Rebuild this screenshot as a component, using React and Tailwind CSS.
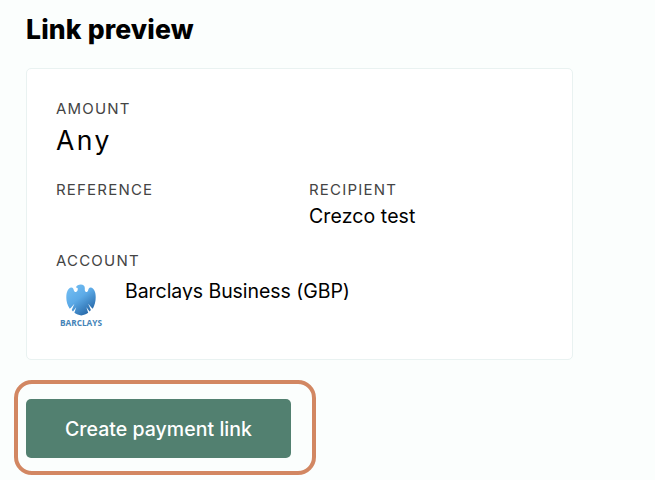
import React from 'react';

const Label = ({ children }) => (
  <p className="h-5 text-[15px] leading-5 tracking-[1.2px] text-[#444]">{children}</p>
);

const BarclaysLogo = () => (
  <svg width="50" height="50" viewBox="0 0 50 50" className="shrink-0 overflow-visible">
    <defs>
      <linearGradient id="eagle" x1="0" y1="0" x2="0.7" y2="1">
        <stop offset="0" stopColor="#78c2f5" />
        <stop offset="0.5" stopColor="#5caae7" />
        <stop offset="1" stopColor="#2566a6" />
      </linearGradient>
    </defs>
    <path
      fill="url(#eagle)"
      d="M19.800 7.600C20.500 5.500 22.500 4.600 24.800 4.600c2.500 0 4 1.300 4 3.400 0 1.600-.2 3 .8 3.800 1.100.6 2.200-.1 2.500-1.300.3-1.500.8-3 2.600-3 1.600.1 2.900 1.400 3.800 3.200.9 1.900 1.200 4.200 1.200 6.500 0 4.200-1 8-2.900 11.600l-1.200-1.100-3.400-4 2.700 6.400-1.300 1.400-3.200-4.300 1.800 5.500c-2 1.400-4.400 2.100-6.900 2.800-2.500-.7-4.900-1.400-6.900-2.800l1.800-5.500-3.200 4.300-1.300-1.400 2.700-6.400-3.400 4-1.200 1.100C11.300 25.200 10.300 21.400 10.300 17.200c0-2.300.3-4.600 1.200-6.500.9-1.800 2.200-3.100 3.800-3.200 1.800 0 2.300 1.500 2.600 3 .3 1.200 1.400 1.900 2.500 1.300 1.100-.7 1.400-2 1.400-3.400-.5-.8-1.200-.9-2-.8z"
    />
    <text
      x="4"
      y="45.500"
      fontFamily="'Open Sans', sans-serif"
      fontSize="9.200"
      fontWeight="700"
      fill="#4584b8"
      textLength="42"
      lengthAdjust="spacingAndGlyphs"
    >
      BARCLAYS
    </text>
  </svg>
);

const App = () => {
  return (
    <div className="h-[480px] w-[655px] overflow-hidden bg-[#fbfefd] pt-[13px] pl-[26px] font-['Inter',sans-serif] text-black">
      <h1 className="h-8 text-[26.5px] leading-8 font-extrabold tracking-[0.16px]">Link preview</h1>

      {/* Preview card */}
      <div className="mt-[23px] h-[292px] w-[547px] rounded-[5px] border border-[#e9f2f1] bg-white px-[29px] pt-[30px]">
        <Label>AMOUNT</Label>
        <p className="mt-[5px] h-8 text-[26.5px] leading-8 tracking-[2.5px]">Any</p>

        <div className="mt-6 grid h-12 grid-cols-[253px_1fr]">
          <div>
            <Label>REFERENCE</Label>
          </div>
          <div>
            <Label>RECIPIENT</Label>
            <p className="mt-1 text-[19.5px] leading-6 tracking-[0.1px]">Crezco test</p>
          </div>
        </div>

        <div className="mt-[23px]">
          <Label>ACCOUNT</Label>
          <div className="mt-[9px] flex">
            <BarclaysLogo />
            <p className="ml-[19px] h-[20px] overflow-hidden text-[19.5px] leading-[22px] tracking-[-0.06px]">
              Barclays Business (GBP)
            </p>
          </div>
        </div>
      </div>

      {/* Highlighted action */}
      <div className="mt-5 -ml-3 h-[95px] w-[302px] rounded-[18px] border-4 border-[#d28762] pt-[15px] pl-2">
        <button className="h-[59px] w-[265px] rounded-[5px] bg-[#528070] pt-0.5 text-[19.5px] font-medium tracking-[0.04px] text-white">
          Create payment link
        </button>
      </div>
    </div>
  );
};

export default App;
